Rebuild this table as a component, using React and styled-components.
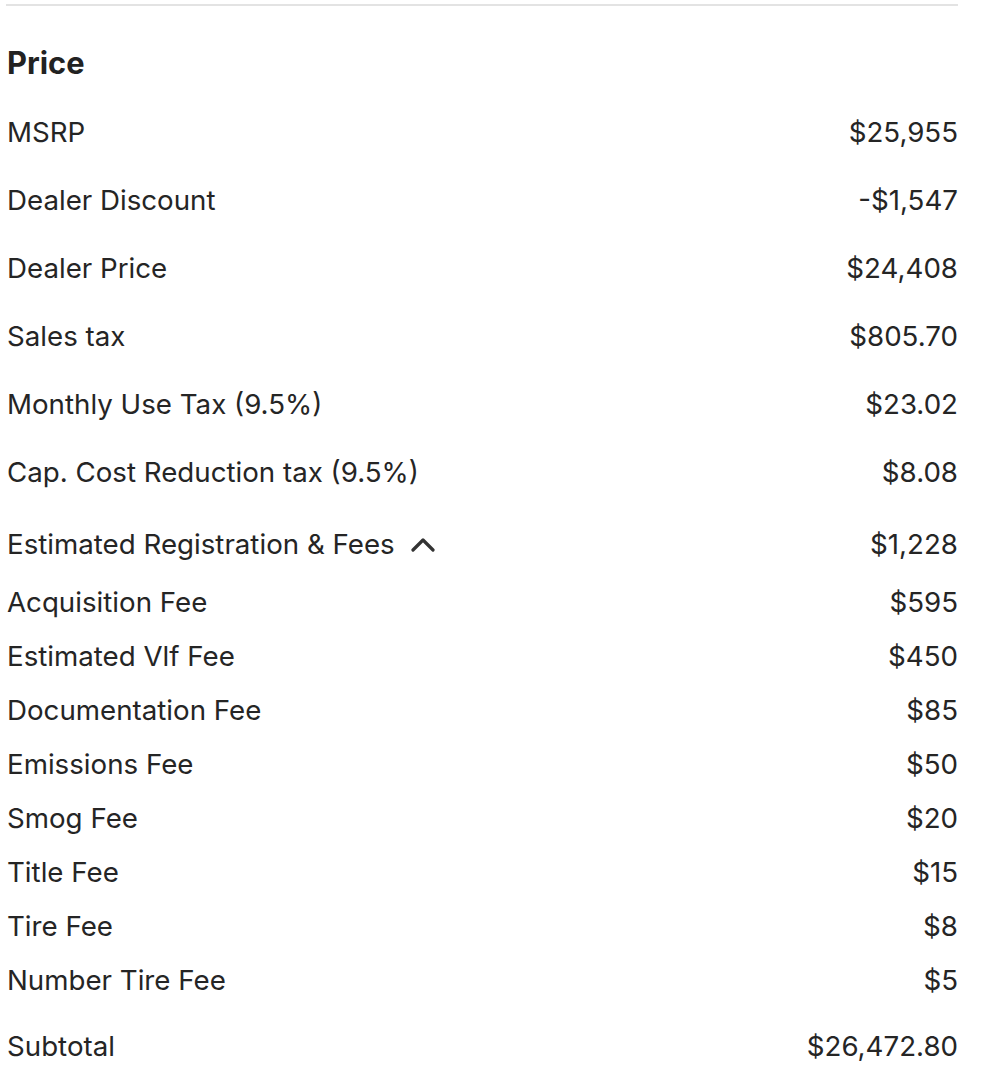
import React from "react";
import styled, { createGlobalStyle } from "styled-components";

const Global = createGlobalStyle`
  html, body { margin: 0; padding: 0; background: #fff; }
  body { font-family: Inter, "Noto Sans", sans-serif; color: #222; }
`;

const Panel = styled.section`
  padding: 4px 28px 0 6px;
  display: flex;
  flex-direction: column;
`;

const Divider = styled.hr`
  margin: 0;
  border: 0;
  height: 2px;
  background: #e3e3e3;
`;

const Heading = styled.h2`
  margin: 40px 0 18px 1px;
  font-size: 30.8px;
  line-height: 34px;
  font-weight: 700;
  color: #222;
`;

const Row = styled.div`
  display: flex;
  justify-content: space-between;
  align-items: center;
  font-size: 27.7px;
  font-weight: 400;
  line-height: 36px;
  color: #252525;
  padding: ${(p) => p.$pad};
`;

const Label = styled.span`
  display: inline-flex;
  align-items: center;
  gap: 16px;
  padding-left: 1px;
`;

const Value = styled.span`
  text-align: right;
`;

const Chevron = () => (
  <svg width="24" height="15" viewBox="0 0 24 15" fill="none">
    <path d="M2 13L12 3l10 10" stroke="#333" strokeWidth="3.2" strokeLinecap="round" strokeLinejoin="round" />
  </svg>
);

const mainRows = [
  ["MSRP", "$25,955"],
  ["Dealer Discount", "-$1,547"],
  ["Dealer Price", "$24,408"],
  ["Sales tax", "$805.70"],
  ["Monthly Use Tax (9.5%)", "$23.02"],
  ["Cap. Cost Reduction tax (9.5%)", "$8.08"],
];

const fees = [
  ["Acquisition Fee", "$595"],
  ["Estimated Vlf Fee", "$450"],
  ["Documentation Fee", "$85"],
  ["Emissions Fee", "$50"],
  ["Smog Fee", "$20"],
  ["Title Fee", "$15"],
  ["Tire Fee", "$8"],
  ["Number Tire Fee", "$5"],
];

export default function App() {
  return (
    <>
      <Global />
      <Panel>
        <Divider />
        <Heading>Price</Heading>
        {mainRows.map(([l, v]) => (
          <Row key={l} $pad="16px 0">
            <Label>{l}</Label>
            <Value>{v}</Value>
          </Row>
        ))}
        <Row $pad="20px 0 13px">
          <Label>
            Estimated Registration &amp; Fees
            <Chevron />
          </Label>
          <Value>$1,228</Value>
        </Row>
        {fees.map(([l, v]) => (
          <Row key={l} $pad="9px 0">
            <Label>{l}</Label>
            <Value>{v}</Value>
          </Row>
        ))}
        <Row $pad="21px 0 16px">
          <Label>Subtotal</Label>
          <Value>$26,472.80</Value>
        </Row>
      </Panel>
    </>
  );
}
